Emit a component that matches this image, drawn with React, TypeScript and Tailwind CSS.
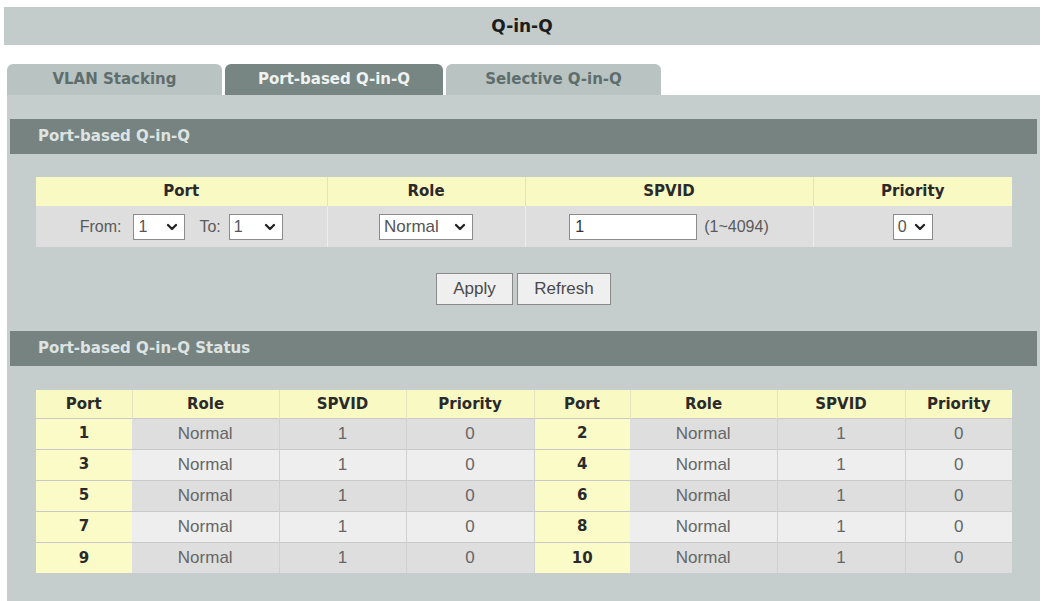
import { ChevronDown } from "lucide-react"

const HEAD = "font-['DejaVu_Sans',sans-serif] font-bold"
const BODY = "font-['Liberation_Sans',Arial,sans-serif]"

const statusRows = [
  [1, 2],
  [3, 4],
  [5, 6],
  [7, 8],
  [9, 10],
]

function FakeSelect({ value, className }: { value: string; className: string }) {
  return (
    <div
      className={`flex h-[26px] items-center justify-between border border-[#8c8c8c] bg-white pl-[4px] pr-[4px] text-[#555] ${className}`}
    >
      <span>{value}</span>
      <ChevronDown size={16} strokeWidth={3.5} className="text-[#222]" />
    </div>
  )
}

function SectionHeader({ title }: { title: string }) {
  return (
    <div className={`flex h-[35px] items-center bg-[#768381] pl-[28px] text-[15px] text-[#dde3e2] ${HEAD}`}>
      {title}
    </div>
  )
}

function Tab({ label, active }: { label: string; active?: boolean }) {
  return (
    <div
      className={
        active
          ? `flex h-[31px] w-[218px] items-center justify-center rounded-t-[6px] bg-[#778583] text-[15px] text-[#eef2f1] ${HEAD}`
          : `flex h-[31px] w-[215px] items-center justify-center rounded-t-[6px] bg-[#b9c3c2] text-[15px] text-[#5e6e6c] ${HEAD}`
      }
    >
      {label}
    </div>
  )
}

export default function App() {
  return (
    <div className="h-[601px] w-[1043px] overflow-hidden bg-white">
      <div
        className={`ml-[4px] mt-[7px] flex h-[38px] w-[1036px] items-center justify-center pt-[2px] bg-[#c3cbcb] text-[17px] text-[#1c1c1c] ${HEAD}`}
      >
        Q-in-Q
      </div>

      <div className="ml-[7px] mt-[19px] flex gap-[3px]">
        <Tab label="VLAN Stacking" />
        <Tab label="Port-based Q-in-Q" active />
        <Tab label="Selective Q-in-Q" />
      </div>

      <div className="ml-[7px] w-[1033px] bg-[#c5cecd] px-[3px] pb-[30px] pt-[24px]">
        <SectionHeader title="Port-based Q-in-Q" />

        <table className="ml-[26px] mt-[23px] w-[976px] table-fixed border-collapse">
          <colgroup>
            <col className="w-[291px]" />
            <col className="w-[198px]" />
            <col className="w-[288px]" />
            <col className="w-[199px]" />
          </colgroup>
          <thead>
            <tr className={`h-[29px] bg-[#f9f9c3] text-[15px] text-[#2a2a2a] ${HEAD}`}>
              <th className="border-r border-[#e3e3c0]">Port</th>
              <th className="border-r border-[#e3e3c0]">Role</th>
              <th className="border-r border-[#e3e3c0]">SPVID</th>
              <th>Priority</th>
            </tr>
          </thead>
          <tbody>
            <tr className={`h-[41px] bg-[#dedede] text-[16px] text-[#5a5a5a] ${BODY}`}>
              <td className="border-r border-[#eeeeee]">
                <div className="flex items-center justify-center">
                  <span>From:</span>
                  <FakeSelect value="1" className="ml-[12px] w-[52px]" />
                  <span className="ml-[14px]">To:</span>
                  <FakeSelect value="1" className="ml-[8px] w-[54px]" />
                </div>
              </td>
              <td className="border-r border-[#eeeeee]">
                <div className="flex justify-center">
                  <FakeSelect value="Normal" className="w-[94px] text-[17px]" />
                </div>
              </td>
              <td className="border-r border-[#eeeeee]">
                <div className="flex items-center justify-center">
                  <div className="flex h-[26px] w-[128px] items-center border border-[#8c8c8c] bg-white pl-[5px] text-[#333]">
                    1
                  </div>
                  <span className="ml-[7px]">(1~4094)</span>
                </div>
              </td>
              <td>
                <div className="flex justify-center">
                  <FakeSelect value="0" className="w-[40px]" />
                </div>
              </td>
            </tr>
          </tbody>
        </table>

        <div className={`mt-[26px] flex justify-center gap-[4px] text-[17px] text-[#4a4a4a] ${BODY}`}>
          <button className="h-[32px] w-[77px] border border-[#8a8a8a] bg-[#efefef]">Apply</button>
          <button className="h-[32px] w-[94px] border border-[#8a8a8a] bg-[#efefef]">Refresh</button>
        </div>

        <div className="mt-[26px]">
          <SectionHeader title="Port-based Q-in-Q Status" />
        </div>

        <table className="ml-[26px] mt-[24px] w-[976px] table-fixed border-collapse">
          <colgroup>
            <col className="w-[96px]" />
            <col className="w-[147px]" />
            <col className="w-[127px]" />
            <col className="w-[128px]" />
            <col className="w-[96px]" />
            <col className="w-[147px]" />
            <col className="w-[128px]" />
            <col className="w-[107px]" />
          </colgroup>
          <thead>
            <tr className={`h-[28px] bg-[#f9f9c3] text-[15px] text-[#2a2a2a] ${HEAD}`}>
              {["Port", "Role", "SPVID", "Priority", "Port", "Role", "SPVID", "Priority"].map((h, i) => (
                <th key={i} className="border-r border-[#e3e3c0] last:border-r-0">
                  {h}
                </th>
              ))}
            </tr>
          </thead>
          <tbody>
            {statusRows.map((pair, r) => (
              <tr
                key={r}
                className={`h-[31px] border-t border-[#c9c9c9] text-[17px] text-[#666] ${BODY} ${
                  r % 2 === 0 ? "bg-[#dedede]" : "bg-[#eeeeee]"
                }`}
              >
                {pair.map((p) => (
                  <>
                    <td key={`p${p}`} className={`bg-[#fbfbc8] text-center text-[15px] text-[#2a2a2a] ${HEAD}`}>
                      {p}
                    </td>
                    <td key={`r${p}`} className="border-r border-[#d0d0d0] text-center">Normal</td>
                    <td key={`s${p}`} className="border-r border-[#d0d0d0] text-center">1</td>
                    <td key={`q${p}`} className="border-r border-[#d0d0d0] text-center last:border-r-0">0</td>
                  </>
                ))}
              </tr>
            ))}
          </tbody>
        </table>
      </div>
    </div>
  )
}
